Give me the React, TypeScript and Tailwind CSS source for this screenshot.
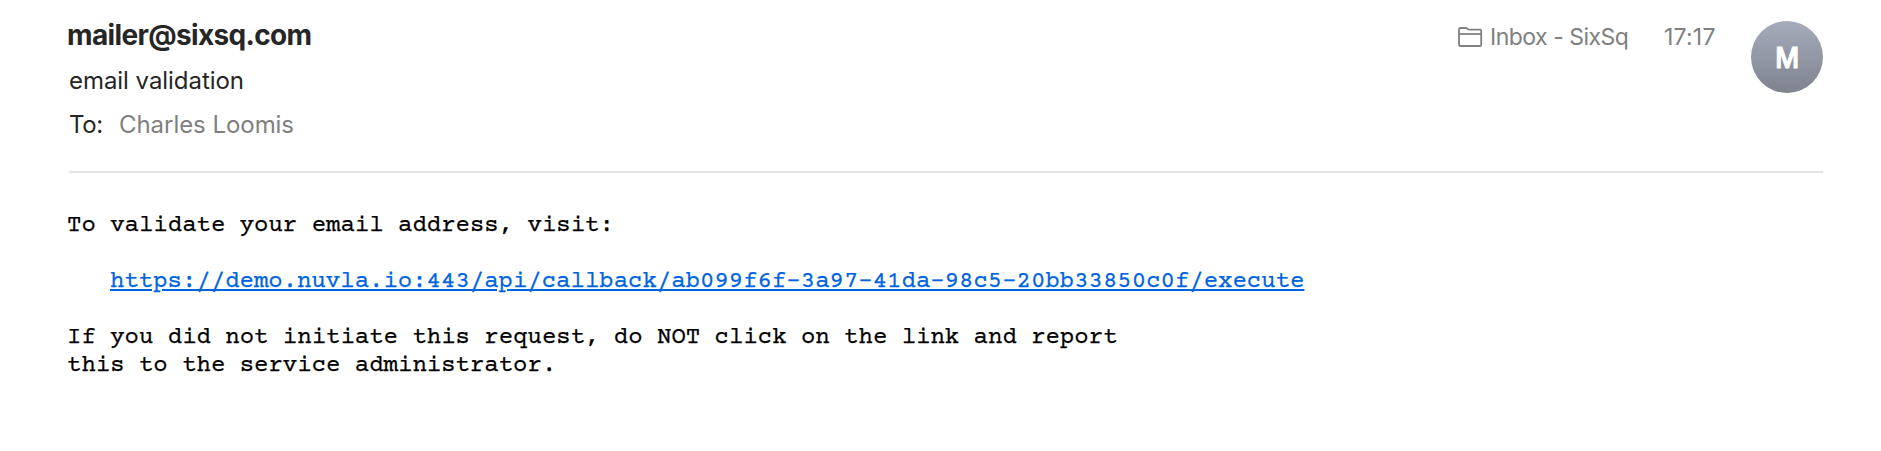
const link =
  "https://demo.nuvla.io:443/api/callback/ab099f6f-3a97-41da-98c5-20bb33850c0f/execute";

function FolderIcon() {
  return (
    <svg
      className="mt-[26px] h-[22px] w-[26px] shrink-0"
      viewBox="0 0 26 22"
      fill="none"
      stroke="#808080"
      strokeWidth="1.8"
      strokeLinejoin="round"
    >
      <path d="M2 18V3.6Q2 2 3.6 2H8.6Q9.6 2 10.3 2.7Q11.1 3.6 12.2 3.6H23.2Q24.2 3.6 24.2 5V18.4Q24.2 20 22.6 20H3.6Q2 20 2 18Z" />
      <path d="M2 8H24" />
    </svg>
  );
}

export default function App() {
  return (
    <main className="h-[451px] w-full overflow-hidden bg-white font-['Inter',sans-serif]">
      <header className="ml-[69px] mr-[58px] flex h-[173px] border-b-2 border-[#e4e4e4] text-[24px] leading-[44px] text-[#262626]">
        <div className="-ml-[2px] flex-1 pt-[13px]">
          <h1 className="text-[28px] font-bold leading-[44px] tracking-[-0.65px]">
            mailer@sixsq.com
          </h1>
          <p className="pl-[2px] pt-[2px] tracking-[-0.05px]">email validation</p>
          <p className="flex pl-[2px]">
            <span className="w-[50px] tracking-[-0.4px]">To:</span>
            <span className="tracking-[-0.05px] text-[#808080]">Charles Loomis</span>
          </p>
        </div>
        <div className="flex text-[23px] text-[#808080]">
          <FolderIcon />
          <span className="ml-[7px] mt-[15px] w-[174px] tracking-[-0.5px]">
            Inbox - SixSq
          </span>
          <span className="mt-[15px] w-[87px] tracking-[0.2px]">17:17</span>
        </div>
        <div className="mt-[21px] flex size-[72px] items-center justify-center rounded-full bg-linear-to-b from-[#a5acbb] to-[#7e838e]">
          <span className="mt-px inline-block scale-x-90 text-[29px] font-medium text-white [-webkit-text-stroke:1.2px_white] [stroke-linejoin:round]">
            M
          </span>
        </div>
      </header>
      <article className="ml-[67px] mt-[39px] whitespace-pre font-['Courier_Prime','Nimbus_Mono_PS','Liberation_Mono',monospace] text-[24px] leading-[28px] text-black [-webkit-text-stroke:0.25px_currentColor]">
        <p>To validate your email address, visit:</p>
        <p className="my-[28px] pl-[43px]">
          <a
            href={link}
            className="text-[#0064e1] underline decoration-[1.5px] underline-offset-[2px]"
          >
            {link}
          </a>
        </p>
        <p>If you did not initiate this request, do NOT click on the link and report</p>
        <p>this to the service administrator.</p>
      </article>
    </main>
  );
}
